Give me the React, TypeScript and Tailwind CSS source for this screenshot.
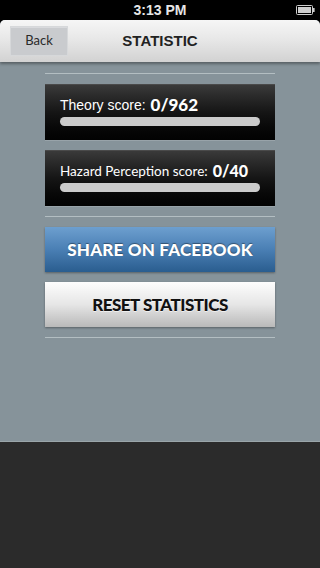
import React from "react";

const sans = { fontFamily: '"Liberation Sans", Arial, sans-serif' };
const geo = { fontFamily: 'Lato, "Open Sans", sans-serif' };

function Battery() {
  return (
    <svg width="19" height="10" viewBox="0 0 19 10" className="block">
      <rect x="0.5" y="0.5" width="16" height="9" rx="1" fill="none" stroke="#cfcfcf" strokeWidth="1" />
      <rect x="2" y="2" width="13" height="6" fill="#cfcfcf" />
      <rect x="17" y="3" width="1.6" height="4" fill="#cfcfcf" />
    </svg>
  );
}

function ScoreBox({ label, value, textSize, valueSize }: { label: string; value: string; textSize: string; valueSize: string }) {
  return (
    <div className="h-[56px] flex flex-col px-[15px] pt-[10px] bg-gradient-to-b from-[#3a3a3a] via-[#151515] to-[#020202] border-t border-[#4a4a4a] shadow-[0_1px_0_rgba(255,255,255,0.15)]">
      <div className={`h-[20px] flex items-center whitespace-nowrap text-white ${textSize}`}>
        <span style={label.startsWith("Hazard") ? geo : sans}>{label}</span>
        <span className={`ml-[5px] font-black ${valueSize}`} style={geo}>{value}</span>
      </div>
      <div className="mt-[2px] h-[9px] rounded-full bg-[#cbcbcb]" />
    </div>
  );
}

export default function App() {
  return (
    <div className="w-[320px] h-[568px] flex flex-col bg-black overflow-hidden">
      <div className="h-[20px] shrink-0 relative flex items-center justify-center bg-black">
        <span className="text-[14px] font-bold text-[#e6e6e6]" style={sans}>3:13 PM</span>
        <div className="absolute right-[5px] top-[5px]">
          <Battery />
        </div>
      </div>
      <div className="h-[422px] shrink-0 flex flex-col bg-[#86939a] rounded-t-[5px] border-b border-[#9aa5a9]">
        <div className="h-[42px] shrink-0 relative flex items-center justify-center rounded-t-[5px] bg-gradient-to-b from-[#f6f6f6] via-[#e6e6e6] to-[#d2d2d2] shadow-[0_2px_3px_rgba(0,0,0,0.35)] z-10">
          <div className="absolute left-[10px] top-[6px] w-[58px] h-[30px] flex items-center justify-center bg-[#c9cbce] border border-[#d6d8da] shadow-[inset_0_1px_0_rgba(255,255,255,0.3)]">
            <span className="text-[13px] text-[#2a2a2a]" style={geo}>Back</span>
          </div>
          <span className="text-[15px] font-bold text-[#222]" style={sans}>STATISTIC</span>
        </div>
        <div className="flex flex-col px-[45px]">
          <div className="mt-[11px] h-[1px] bg-[#b3bec2]" />
          <div className="mt-[10px]">
            <ScoreBox label="Theory score:" value="0/962" textSize="text-[14px]" valueSize="text-[17px]" />
          </div>
          <div className="mt-[10px]">
            <ScoreBox label="Hazard Perception score:" value="0/40" textSize="text-[13.5px]" valueSize="text-[16px]" />
          </div>
          <div className="mt-[10px] h-[1px] bg-[#b3bec2]" />
          <div className="mt-[10px] h-[45px] flex items-center justify-center bg-gradient-to-b from-[#6d9fcf] via-[#4a7fb4] to-[#2a5d8f] shadow-[0_1px_2px_rgba(0,0,0,0.35)]">
            <span className="text-[17px] font-black text-white tracking-[0.2px] [text-shadow:0_-1px_1px_rgba(0,0,0,0.4)]" style={geo}>SHARE ON FACEBOOK</span>
          </div>
          <div className="mt-[10px] h-[45px] flex items-center justify-center bg-gradient-to-b from-[#fdfdfd] via-[#e6e6e6] to-[#b9b9b9] shadow-[0_1px_2px_rgba(0,0,0,0.35)]">
            <span className="text-[17px] font-black text-[#111] tracking-[-0.5px] [text-shadow:0_1px_0_rgba(255,255,255,0.6)]" style={geo}>RESET STATISTICS</span>
          </div>
          <div className="mt-[10px] h-[1px] bg-[#b3bec2]" />
        </div>
      </div>
      <div className="flex-1 bg-[#2b2b2b]" />
    </div>
  );
}
